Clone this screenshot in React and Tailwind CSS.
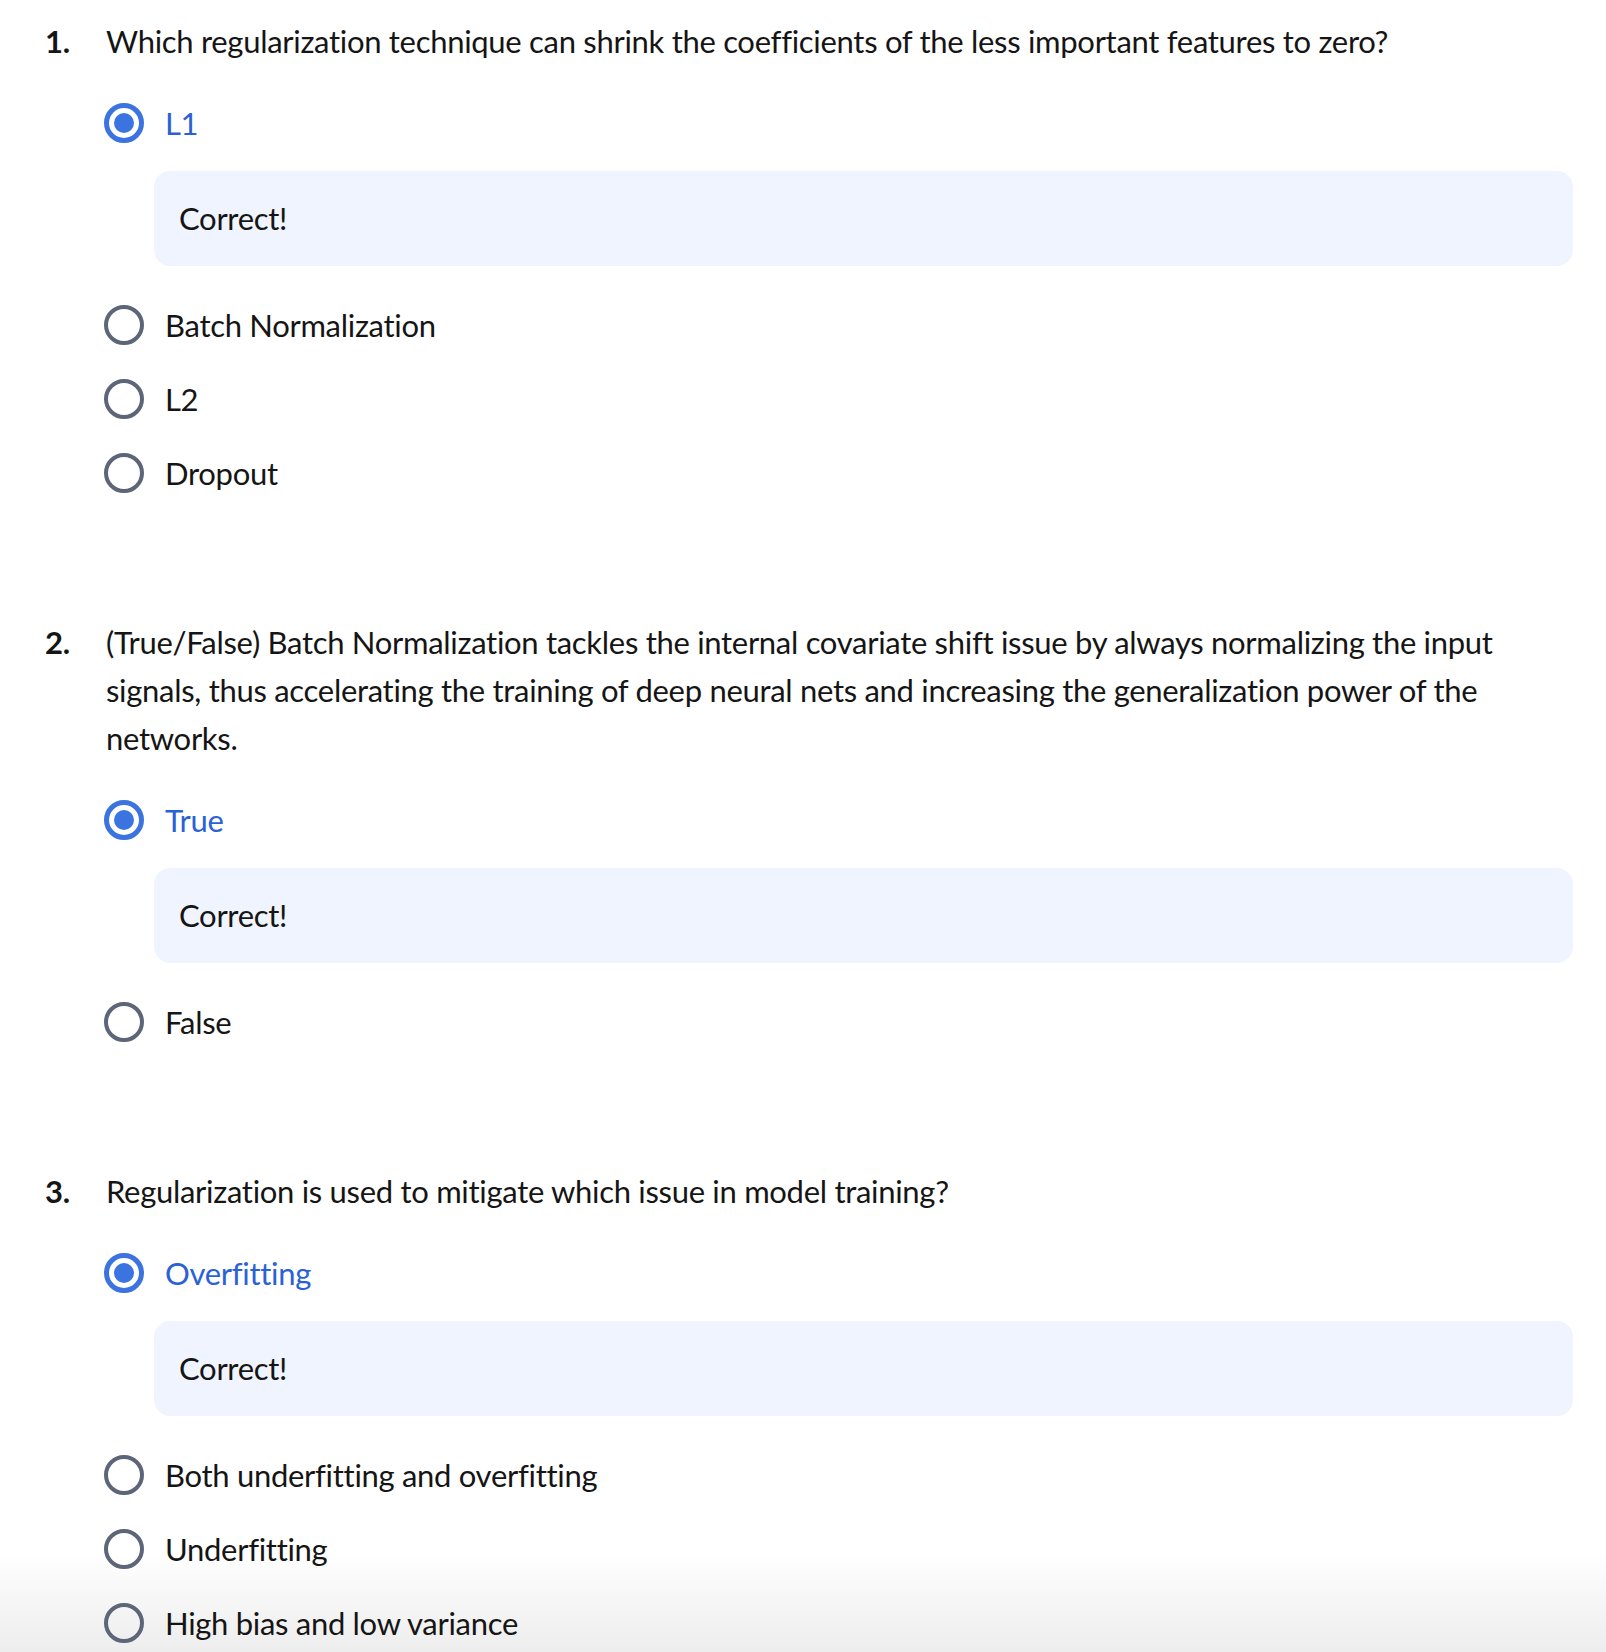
import React from "react";

const questions = [
  {
    num: "1.",
    text: "Which regularization technique can shrink the coefficients of the less important features to zero?",
    options: ["L1", "Batch Normalization", "L2", "Dropout"],
    selected: 0,
  },
  {
    num: "2.",
    text: "(True/False) Batch Normalization tackles the internal covariate shift issue by always normalizing the input signals, thus accelerating the training of deep neural nets and increasing the generalization power of the networks.",
    options: ["True", "False"],
    selected: 0,
  },
  {
    num: "3.",
    text: "Regularization is used to mitigate which issue in model training?",
    options: ["Overfitting", "Both underfitting and overfitting", "Underfitting", "High bias and low variance"],
    selected: 0,
  },
];

const Radio = ({ checked }) =>
  checked ? (
    <span className="flex h-[40px] w-[40px] shrink-0 items-center justify-center rounded-full border-[5px] border-[#3b74e0]">
      <span className="h-[20px] w-[20px] rounded-full bg-[#3b74e0]" />
    </span>
  ) : (
    <span className="h-[40px] w-[40px] shrink-0 rounded-full border-[4px] border-[#5d6579]" />
  );

const Question = ({ q, first }) => (
  <div className={first ? "" : "mt-[108px]"}>
    <div className="flex leading-[48px]">
      <span className="w-[61px] shrink-0 font-bold">{q.num}</span>
      <p className="flex-1">{q.text}</p>
    </div>
    <div className="ml-[59px] mt-[21px]">
      {q.options.map((opt, i) => (
        <div key={opt}>
          <label className="flex h-[74px] items-center gap-[21px]">
            <Radio checked={i === q.selected} />
            <span className={i === q.selected ? "text-[#2a62d6]" : ""}>{opt}</span>
          </label>
          {i === q.selected && (
            <div className="mb-[22px] ml-[50px] mt-[11px] flex h-[95px] items-center rounded-[16px] bg-[#eff4fe] px-[25px]">
              Correct!
            </div>
          )}
        </div>
      ))}
    </div>
  </div>
);

export default function App() {
  return (
    <div
      className="relative h-[1652px] overflow-hidden bg-white text-[31px] tracking-[-0.3px] text-[#151515]"
      style={{ fontFamily: "Lato, 'Noto Sans', sans-serif" }}
    >
      {/* soft shading at the bottom edge, behind the text */}
      <div className="pointer-events-none absolute inset-x-0 bottom-0 h-[100px] bg-linear-to-b from-white to-[#ededed]" />
      <div className="relative pl-[45px] pr-[33px] pt-[17px]">
        {questions.map((q, i) => (
          <Question key={q.num} q={q} first={i === 0} />
        ))}
      </div>
    </div>
  );
}
